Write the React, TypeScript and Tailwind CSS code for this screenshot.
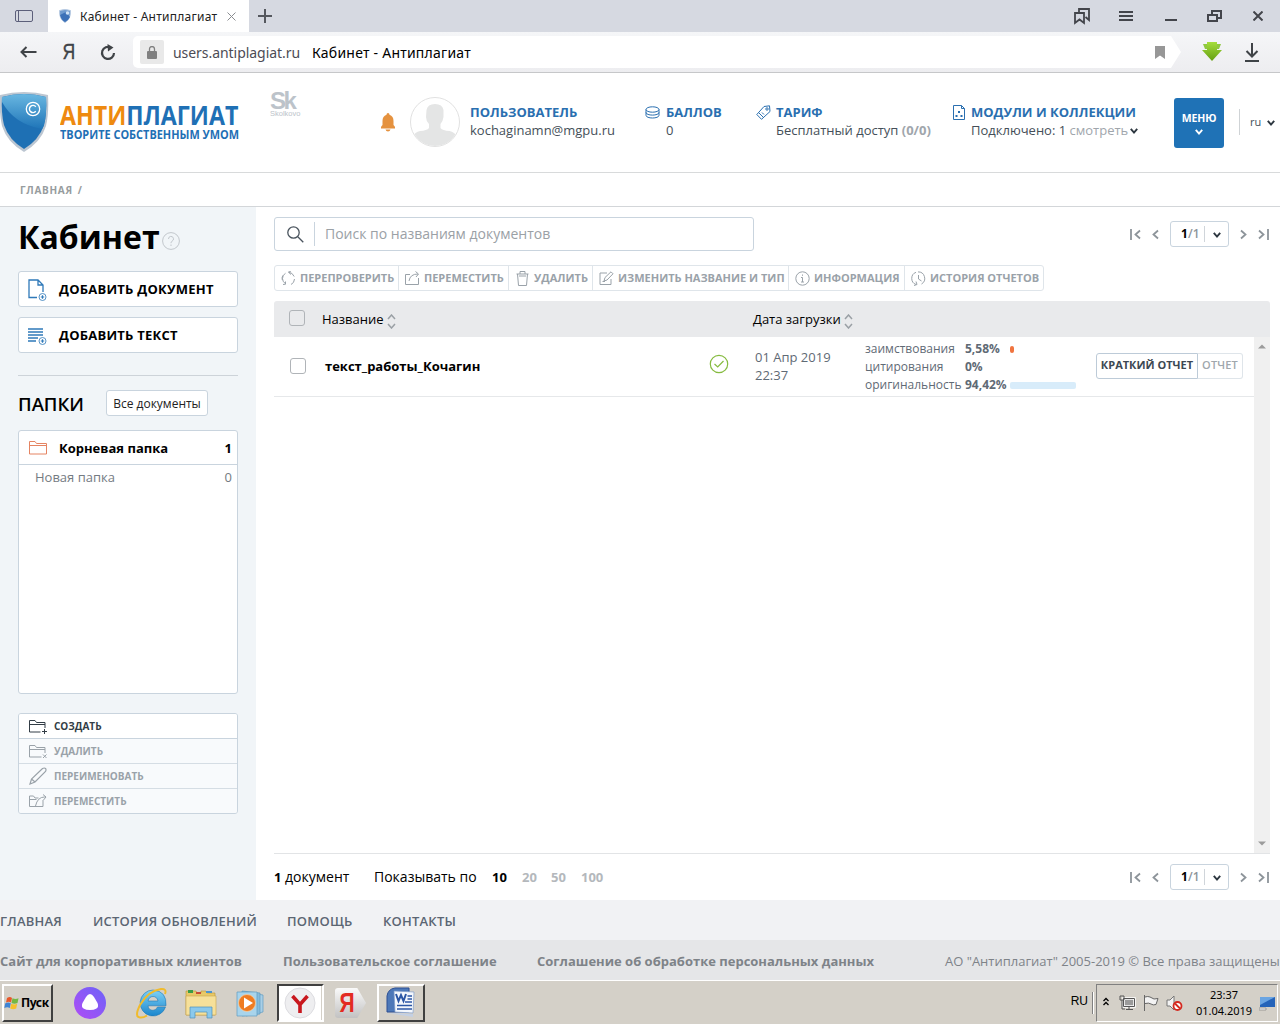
import React from "react";

type IconProps = { className?: string };
type Kids = { children: React.ReactNode; className?: string };

const Line = ({ w = 16, h = 16, sw = 1, className = "", children }: { w?: number; h?: number; sw?: number; className?: string; children: React.ReactNode }) => (
  <svg width={w} height={h} viewBox={`0 0 ${w} ${h}`} fill="none" stroke="currentColor" strokeWidth={sw} className={`shrink-0 ${className}`}>
    {children}
  </svg>
);

const Chevron = ({ className = "" }: IconProps) => (
  <Line w={8} h={6} sw={1.9} className={className}><path d="M.8 .8L4 4.500 7.200 .8" /></Line>
);

/* ---------- Browser ---------- */

function TabStrip() {
  return (
    <div className="flex h-8 items-center bg-[#d6d9e1] text-[#43454b]">
      <div className="flex w-12 justify-center">
        <Line w={18} h={12} className="text-[#5c5f7a]"><rect x="0.5" y="0.5" width="17" height="11" rx="1.5" /><path d="M3.500 1v10" /></Line>
      </div>
      <div className="flex h-8 w-[201px] items-center bg-white">
        <svg width="12" height="14" viewBox="0 0 12 14" className="ml-[11px] shrink-0">
          <path d="M0.5 1.5Q6 -.5 11.5 1.5Q12 10 6 13.5Q0 10 .5 1.5Z" fill="#6f9bcf" stroke="#b9cbe2" />
          <path d="M1 6L7 3L11 8Q9 12 6 13Q2 11 1 6Z" fill="#3d72b8" />
          <circle cx="8.5" cy="4" r="1.8" fill="#cfe2f5" />
        </svg>
        <span className="ml-[9px] w-[139px] pt-px font-['Noto_Sans'] text-[12px] tracking-[0.250px] text-[#222]">Кабинет - Антиплагиат</span>
        <Line w={9} h={9} className="ml-[8px] text-[#8a8c90]"><path d="M.5 .5l8 8M8.500 .5l-8 8" /></Line>
      </div>
      <Line w={14} h={14} sw={2} className="ml-[9px] text-[#55585e]"><path d="M7 0v14M0 7h14" /></Line>
      <div className="ml-auto flex items-center">
        <Line w={16} h={17} sw={1.800} className="mr-[29px]"><path d="M1 5h9v10l-4.500-3.500L1 15zM5 5V1h10v11l-3.500-3" /></Line>
        <Line w={14} h={10} sw={2} className="mr-[32px]"><path d="M0 1h14M0 5h14M0 9h14" /></Line>
        <Line w={12} h={10} sw={2} className="mr-[30px]"><path d="M0 9h12" /></Line>
        <Line w={15} h={12} sw={2} className="mr-[31px]"><path d="M1 5h9v6H1zM5 5V1h9v7h-4" /></Line>
        <Line w={10} h={10} sw={2} className="mr-[17px]"><path d="M.5 .5l9 9M9.500 .5l-9 9" /></Line>
      </div>
    </div>
  );
}

function AddressBar() {
  return (
    <div className="flex h-[41px] items-center border-b border-[#c6c7c9] bg-gradient-to-b from-[#f5f6f8] to-[#ededf0] text-[#3f4347]">
      <Line w={17} h={12} sw={2} className="ml-[20px]"><path d="M16.500 6H1.500M6.500 1L1.500 6l5 5" /></Line>
      <span className="ml-[24px] w-[14px] scale-x-[0.800] text-center font-['Liberation_Sans'] text-[22px] leading-none [-webkit-text-stroke:0.4px]">Я</span>
      <Line w={16} h={17} sw={2.2} className="ml-[25px]"><path d="M10.800 3.600A6 6 0 1 0 14 9" /><path d="M7.500 0l6 3.500-5.500 4z" fill="currentColor" stroke="none" /></Line>
      <div className="ml-[17px] flex h-8 w-[1048px] items-center rounded-l-[5px] bg-white [clip-path:polygon(0_0,1038px_0,100%_50%,1038px_100%,0_100%)]">
        <div className="ml-[7px] flex h-6 w-6 items-center justify-center rounded-[2px] bg-[#e9e9e9] text-[#808080]">
          <Line w={10} h={13}><rect x="0" y="5" width="10" height="8" rx="1" fill="currentColor" stroke="none" /><path d="M2.500 5.500V3a2.500 2.500 0 0 1 5 0v2.500" strokeWidth="1.300" /></Line>
        </div>
        <span className="ml-[9px] w-[139px] font-['Noto_Sans'] text-[14px] tracking-[-0.050px] text-[#4c4c55]">users.antiplagiat.ru</span>
        <span className="font-['Noto_Sans'] text-[14px] tracking-[0.230px] text-black">Кабинет - Антиплагиат</span>
        <svg width="10" height="13" viewBox="0 0 10 13" className="ml-auto mr-[16px]"><path d="M0 0h10v13L5 9.500 0 13z" fill="#979797" /></svg>
      </div>
      <svg width="20" height="20" viewBox="0 0 20 20" className="ml-[21px] shrink-0">
        <defs><linearGradient id="dl" x1="0" y1="0" x2="0" y2="1"><stop offset="0" stopColor="#a4dd3c" /><stop offset="1" stopColor="#659f12" /></linearGradient></defs>
        <path d="M1 2h4v5H3zM19 2h-4v5h2z" fill="#8fc840" />
        <path d="M5 0h10v8h5L10 19 0 8h5z" fill="url(#dl)" />
      </svg>
      <Line w={14} h={19} sw={2} className="ml-[23px]"><path d="M7 0v13M1.500 8L7 13.500 12.500 8M0 18h14" /></Line>
    </div>
  );
}

/* ---------- Site header ---------- */

function Shield() {
  return (
    <svg width="49" height="62" viewBox="0 0 49 62" className="shrink-0">
      <defs>
        <linearGradient id="sh" x1="0" y1="0" x2="0" y2="1"><stop offset="0" stopColor="#69b7e1" /><stop offset="1" stopColor="#1f75b8" /></linearGradient>
      </defs>
      <path d="M0 4Q24-2 48 4Q49 22 46 35Q41 51 24 61Q7 51 2 35Q-1 22 0 4Z" fill="#bcc6d1" />
      <path d="M2 6Q24 0 46 6Q47 22 44 34Q39 49 24 58Q9 49 4 34Q1 22 2 6Z" fill="#1e70b4" />
      <path d="M2 6Q24 0 46 6Q47 22 44 34Q43 37 42 38Q14 33 2 11Z" fill="url(#sh)" />
      <circle cx="33" cy="18" r="6.700" fill="none" stroke="#fff" strokeWidth="1.300" />
      <path d="M35.800 15.700a3.600 3.600 0 1 0 0 4.600" fill="none" stroke="#fff" strokeWidth="1.400" />
    </svg>
  );
}

const HeadTitle = ({ children, className = "" }: Kids) => (
  <div className={`h-[18px] text-[13px] font-bold leading-[18px] text-[#2a6fb0] ${className}`}>{children}</div>
);
const HeadText = ({ children, className = "" }: Kids) => (
  <div className={`flex h-[18px] items-center text-[13px] leading-[18px] text-[#454f59] ${className}`}>{children}</div>
);

function SiteHeader() {
  return (
    <header className="flex h-[100px] items-start border-b border-[#d8dadb] bg-white">
      <div className="flex w-[270px] pt-[18px]">
        <Shield />
        <div className="ml-[11px] flex w-[180px] flex-col pt-[10px] font-bold">
          <span className="h-[27px] origin-left scale-x-[0.859] text-[27px] leading-[27px] text-[#1f70b5]"><span className="text-[#ee8a10]">АНТИ</span>ПЛАГИАТ</span>
          <span className="h-[14px] origin-left scale-x-[0.910] text-[12px] leading-[14px] text-[#1f70b5]">ТВОРИТЕ СОБСТВЕННЫМ УМОМ</span>
        </div>
      </div>
      <div className="flex w-[110px] flex-col pt-[18px] font-['Liberation_Sans'] text-[#bcc3ca]">
        <span className="h-[19px] text-[24px] font-bold leading-[19px] tracking-[-2.500px]">Sk</span>
        <span className="text-[7.500px] leading-[8px]">Skolkovo</span>
      </div>
      <svg width="16" height="20" viewBox="0 0 16 20" className="mt-[40px] shrink-0"><path d="M8 0q1.500 0 1.500 1.700Q13.500 3 13.500 8v4q1 1 1.500 2v1.500H1V14q.5-1 1.500-2V8Q2.500 3 6.500 1.700 6.500 0 8 0ZM5.500 16.500h5q-.5 2-2.500 2t-2.500-2Z" fill="#e5923f" /></svg>
      <svg width="50" height="50" viewBox="0 0 50 50" className="ml-[14px] mt-[24px] shrink-0">
        <defs><clipPath id="av"><circle cx="25" cy="25" r="24" /></clipPath></defs>
        <circle cx="25" cy="25" r="24.500" fill="#fff" stroke="#e1e1e1" />
        <path clipPath="url(#av)" d="M16.500 13q1-6 8.500-6t8.500 6v7q-.5 4-3 7v4q2 2.500 9 3 5 1 8 6V50H2V40q3-5 8-6 7-.5 9-3v-4q-3-3-3-7Z" fill="#e4e5e5" />
      </svg>
      <div className="ml-[10px] mt-[30px] w-[175px]">
        <HeadTitle>ПОЛЬЗОВАТЕЛЬ</HeadTitle>
        <HeadText>kochaginamn@mgpu.ru</HeadText>
      </div>
      <div className="mt-[30px] flex w-[111px]">
        <Line w={15} h={13} className="mr-[6px] mt-[3px] text-[#2a6fb0]"><ellipse cx="7.500" cy="3.500" rx="6.500" ry="2.700" /><path d="M1 3.500v5.800c0 3.600 13 3.600 13 0V3.500M1 6.400c0 3.600 13 3.600 13 0" /></Line>
        <div><HeadTitle>БАЛЛОВ</HeadTitle><HeadText>0</HeadText></div>
      </div>
      <div className="mt-[30px] flex w-[197px]">
        <Line w={15} h={15} className="mr-[5px] mt-[2px] text-[#2a6fb0]"><path d="M8 1.500L13.500 .8 14 6.500 5.500 14.300.8 9.500zM3 8l5 5" /><circle cx="11" cy="4" r="1.200" /><path d="M6 7.500l2 2" /></Line>
        <div><HeadTitle>ТАРИФ</HeadTitle><HeadText>Бесплатный доступ&nbsp;<b className="text-[#a0a6ac]">(0/0)</b></HeadText></div>
      </div>
      <div className="mt-[30px] flex w-[221px]">
        <Line w={12} h={15} className="mr-[6px] mt-[2px] text-[#2a6fb0]"><path d="M.5 .5h8l3 3v11H.5zM8.500 .5v3h3" /><path d="M5 6h2v2H5zM2.500 10h2v2h-2zM7.500 10h2v2h-2z" fill="currentColor" stroke="none" /></Line>
        <div><HeadTitle>МОДУЛИ И КОЛЛЕКЦИИ</HeadTitle><HeadText>Подключено: 1&nbsp;<span className="text-[#a0a6ac]">смотреть</span><Chevron className="ml-[2px] mt-[2px] text-[#2d3740]" /></HeadText></div>
      </div>
      <div className="mt-[25px] flex h-[50px] w-[50px] shrink-0 flex-col items-center rounded-[3px] bg-[#1f72b6] text-white">
        <span className="mt-[12px] text-[10.500px] font-bold leading-[16px] tracking-[-0.150px]">МЕНЮ</span>
        <Chevron className="mt-[3px]" />
      </div>
      <div className="ml-[15px] mt-[36px] flex h-[26px] items-center border-l border-[#cfd3d6] pl-[10px] text-[11px] text-[#454f59]">ru<Chevron className="ml-[6px] mt-[2px] text-[#2d3740]" /></div>
    </header>
  );
}

/* ---------- Sidebar ---------- */

const PlusBadge = ({ x, y }: { x: number; y: number }) => (
  <g><circle cx={x} cy={y} r="3.500" strokeWidth="0.800" fill="#fff" /><path d={`M${x - 1.700} ${y}h3.400M${x} ${y - 1.700}v3.400`} strokeWidth="1.200" /></g>
);
const folder = "M.5 13V1.500h5.500l1.500 2h8.500V9M.5 5.500h15.500";

function BigButton({ icon, children }: { icon: React.ReactNode; children: React.ReactNode }) {
  return (
    <button className="flex h-9 w-[220px] items-center rounded-[3px] border border-[#c9d4de] bg-white pl-[9px] text-[13px] font-bold tracking-[0.230px] text-black">
      <span className="flex w-[31px] pt-[2px]">{icon}</span><span className="pt-[2px]">{children}</span>
    </button>
  );
}

function FolderAction({ icon, label, on = false }: { icon: React.ReactNode; label: string; on?: boolean }) {
  return (
    <div className={`flex h-[25px] items-center border-b pl-[10px] text-[10px] font-bold last:h-[24px] last:border-b-0 ${on ? "border-[#c9d4de] bg-white text-[#333d46]" : "border-[#d5dde4] bg-[#f8fafc] text-[#9aa2a9]"}`}>
      <span className="flex w-[25px]">{icon}</span>{label}
    </div>
  );
}

function Sidebar() {
  return (
    <aside className="w-[256px] shrink-0 bg-[#f1f5f8] px-[18px]">
      <div className="flex h-[64px] items-start">
        <h1 className="text-[32px] font-bold leading-[60px] text-black">Кабинет</h1>
        <Line w={18} h={18} className="ml-[2px] mt-[25px] text-[#c2c7cc]"><circle cx="9" cy="9" r="8.400" /><path d="M6.500 7a2.500 2.500 0 1 1 3.500 2.200q-1 .5-1 2M9 12.500v1.500" /></Line>
      </div>
      <div className="flex flex-col gap-[10px]">
        <BigButton icon={<Line w={19} h={22} sw={1.300} className="text-[#2f79b9]"><path d="M9 18.500H1V1h9l5 5v7M10 1v5h5" /><PlusBadge x={14.500} y={18} /></Line>}>ДОБАВИТЬ ДОКУМЕНТ</BigButton>
        <BigButton icon={<Line w={19} h={18} sw={1.600} className="text-[#2f79b9]"><path d="M0 2h15M0 5h15M0 8h15M0 11h10M0 14h8" /><PlusBadge x={14.500} y={14} /></Line>}>ДОБАВИТЬ ТЕКСТ</BigButton>
      </div>
      <div className="mt-[22px] flex h-[55px] items-center border-t border-[#cdd3d9]">
        <span className="w-[88px] pt-px text-[18.500px] font-semibold text-black">ПАПКИ</span>
        <button className="h-[26px] w-[102px] rounded-[3px] border border-[#c9d4de] bg-white pt-px text-[12px] text-[#222]">Все документы</button>
      </div>
      <div className="h-[264px] rounded-[3px] border border-[#c9d4de] bg-white">
        <div className="flex h-[34px] items-center border-b border-[#c9d4de] pl-[10px] pr-[5px] pt-[2px] text-[13px] font-bold text-black">
          <Line w={18} h={15} className="mb-[2px] mr-[12px] text-[#e58462]"><path d="M.5 14V1.500h5.500l1.500 2h10V14zM.5 5.500h17" /></Line>Корневая папка<span className="ml-auto">1</span>
        </div>
        <div className="flex h-[26px] items-center pl-[16px] pr-[5px] text-[13px] text-[#747b82]">Новая папка<span className="ml-auto">0</span></div>
      </div>
      <div className="mt-[19px] overflow-hidden rounded-[3px] border border-[#c9d4de]">
        <FolderAction on label="СОЗДАТЬ" icon={<Line w={19} h={15}><path d={folder} /><path d="M.5 13h11M15.500 10v5M13 12.500h5" /></Line>} />
        <FolderAction label="УДАЛИТЬ" icon={<Line w={19} h={15}><path d={folder} /><path d="M.5 13h12M14 10.500l3.500 3.500M17.500 10.500L14 14" /></Line>} />
        <FolderAction label="ПЕРЕИМЕНОВАТЬ" icon={<Line w={19} h={18} sw={1.200}><path d="M1 17l1.500-5L13.500 1.500q2-1 3 0t0 3L6 15zM2.500 12L6 15" /></Line>} />
        <FolderAction label="ПЕРЕМЕСТИТЬ" icon={<Line w={19} h={14}><path d="M14 6v6.500H.5V2h4l1.500 2h3.500M.5 5.500h7M6.500 12q2-9 9-9h1.500M14 .5L17 3l-2.500 3" /></Line>} />
      </div>
    </aside>
  );
}

/* ---------- Documents ---------- */

function Pager() {
  return (
    <div className="mr-px flex items-center text-[#8d949a]">
      <Line w={11} h={11} sw={1.800}><path d="M1 0v11M10 1.500L5.500 5.500 10 9.500" /></Line>
      <Line w={7} h={11} sw={1.800} className="ml-[11px]"><path d="M6 1.500L1.500 5.500 6 9.500" /></Line>
      <div className="ml-[11px] flex h-[26px] w-[59px] items-center rounded-[3px] border border-[#c9d4de] bg-white pl-[10px] text-[12px]">
        <b className="text-black">1</b><span className="font-semibold tracking-[0.300px]">/1</span>
        <span className="ml-[4px] h-4 w-px bg-[#d0d5da]" />
        <Chevron className="ml-[8px] mt-[1px] text-[#2d3740]" />
      </div>
      <Line w={7} h={11} sw={1.800} className="ml-[11px]"><path d="M1 1.500L5.500 5.500 1 9.500" /></Line>
      <Line w={11} h={11} sw={1.800} className="ml-[11px]"><path d="M10 0v11M1 1.500L5.500 5.500 1 9.500" /></Line>
    </div>
  );
}

const tools: { label: string; w: string; icon: React.ReactNode }[] = [
  { label: "ПЕРЕПРОВЕРИТЬ", w: "w-[124px]", icon: <path d="M4.500 12.700A6 6 0 0 1 4.500 2.300M7.500 1.200Q11.500 1.500 13.200 5.500M13.500 8Q13.300 12 10 13.500M1.800 4.500A6 6 0 0 0 1.300 9M10 3.500L7.500 1.200 10 0M4.500 10.500v2.700L2 13.500" /> },
  { label: "ПЕРЕМЕСТИТЬ", w: "w-[110px]", icon: <path d="M5 3.500H.5v10h13V7M4 10q1-7 9-7M10.500 .5L13.500 3 11 6" /> },
  { label: "УДАЛИТЬ", w: "w-[84px]", icon: <path d="M1.500 3h12M5 3V.5h5V3M2.500 3l1 11.500h8L12.500 3M4 5h7" /> },
  { label: "ИЗМЕНИТЬ НАЗВАНИЕ И ТИП", w: "w-[196px]", icon: <path d="M8 2H1v11.500h11V8M5 10l1-3.500L12 .8l2 2L8 9zM3.500 10.500H6" /> },
  { label: "ИНФОРМАЦИЯ", w: "w-[116px]", icon: <><circle cx="7.500" cy="7.500" r="6.700" /><path d="M6 6.500h1.500V11M6 11h3M7.500 3.500v1.300" /></> },
  { label: "ИСТОРИЯ ОТЧЕТОВ", w: "w-[138px]", icon: <path d="M5 13.500A6.500 6.500 0 0 1 5 1.300M7 .9A6.500 6.500 0 0 1 10.500 13M7.500 4v4l3 2M5 10.500l1 3-3 1" /> },
];

const Sort = () => <Line w={9} h={15} sw={1.500} className="ml-[3px] mt-[2px] text-[#9aa0a5]"><path d="M1 5l3.500-4L8 5M1 10l3.500 4L8 10" /></Line>;
const Check = ({ className = "" }: IconProps) => <span className={`h-4 w-4 shrink-0 rounded-[3px] border border-[#b0b4b8] ${className}`} />;

function Stat({ name, value, bar }: { name: string; value: string; bar?: string }) {
  return (
    <div className="flex h-[18px] items-center">
      <span className="w-[100px] text-[12px]">{name}</span>
      <b className="w-[45px] text-[12px]">{value}</b>
      {bar && <span className={bar} />}
    </div>
  );
}

function Documents() {
  return (
    <main className="flex flex-1 flex-col bg-white pl-[18px] pr-[10px] pt-[10px]">
      <div className="flex h-[34px] items-center justify-between">
        <div className="flex h-[34px] w-[480px] items-center rounded-[3px] border border-[#c9d4de] text-[14px] text-[#9ba1a6]">
          <Line w={17} h={17} sw={1.300} className="ml-[12px] mt-px text-[#4a545e]"><circle cx="6.500" cy="6.500" r="5.700" /><path d="M10.800 10.800l5.500 5.500" /></Line>
          <span className="ml-[10px] h-6 w-px bg-[#c9d4de]" />
          <span className="ml-[10px] pb-[2px]">Поиск по названиям документов</span>
        </div>
        <Pager />
      </div>
      <div className="mt-[14px] flex h-[26px] w-[770px] rounded-[3px] border border-[#dfe5ea]">
        {tools.map((t) => (
          <div key={t.label} className={`flex shrink-0 items-center border-r border-[#dfe5ea] pl-[6px] text-[11px] font-bold text-[#9aa2a9] last:border-r-0 ${t.w}`}>
            <Line w={15} h={15} className="mr-[4px]">{t.icon}</Line>{t.label}
          </div>
        ))}
      </div>
      <div className="mt-[10px] flex h-[36px] items-center rounded-t-[3px] bg-[#e9eaec] text-[13px] text-black">
        <Check className="mb-[2px] ml-[15px]" />
        <div className="ml-[17px] flex w-[431px] items-center pt-[2px]">Название<Sort /></div>
        <div className="flex items-center pt-[2px]">Дата загрузки<Sort /></div>
      </div>
      <div className="flex h-[517px] border-b border-[#e2e4e6]">
        <div className="flex-1">
          <div className="flex h-[60px] items-center border-b border-[#e6e8ea] pb-[2px] text-[#5f6a75]">
            <Check className="ml-[16px]" />
            <span className="ml-[19px] w-[384px] pt-[2px] text-[13px] font-bold text-black">текст_работы_Кочагин</span>
            <Line w={20} h={20} className="mb-[3px] text-[#86bb40]" sw={1.200}><circle cx="10" cy="10" r="8.700" /><path d="M5.500 10l3.200 3L14.500 7" /></Line>
            <div className="ml-[26px] w-[110px] text-[13px] leading-[18px]">01 Апр 2019<br />22:37</div>
            <div className="w-[231px] self-start pt-[3px]">
              <Stat name="заимствования" value="5,58%" bar="h-[7px] w-1 rounded-[2px] bg-[#f0743f]" />
              <Stat name="цитирования" value="0%" />
              <Stat name="оригинальность" value="94,42%" bar="h-[7px] w-[66px] rounded-[2px] bg-[#d8ecfa]" />
            </div>
            <button className="h-[26px] w-[102px] rounded-l-[3px] border border-[#bdcbd8] text-[11px] font-bold text-[#3c4853]">КРАТКИЙ ОТЧЕТ</button>
            <button className="h-[26px] w-[45px] rounded-r-[3px] border border-l-0 border-[#dfe5ea] text-[11px] font-semibold tracking-[0.150px] text-[#a0a7ad]">ОТЧЕТ</button>
          </div>
        </div>
        <div className="flex w-4 flex-col items-center justify-between bg-[#f0f0f0] py-[7px]">
          <svg width="10" height="5" viewBox="0 0 10 5"><path d="M1 4.500L5 .5l4 4z" fill="#9b9b9b" /></svg>
          <svg width="10" height="5" viewBox="0 0 10 5"><path d="M1 .5l4 4 4-4z" fill="#9b9b9b" /></svg>
        </div>
      </div>
      <div className="flex h-[46px] items-center text-[14px] text-black">
        <div className="w-[100px]"><b className="text-[13px]">1</b> документ</div>
        <span className="w-[118px] pb-[2px]">Показывать по</span>
        <div className="flex pt-px text-[13px] font-bold text-[#b4b8bc]">
          <span className="w-[30px] text-black">10</span><span className="w-[29px]">20</span><span className="w-[30px]">50</span><span>100</span>
        </div>
        <div className="ml-auto"><Pager /></div>
      </div>
    </main>
  );
}

function Footer() {
  return (
    <footer>
      <nav className="flex h-10 items-center bg-[#f1f2f4] pt-[3px] text-[13px] font-semibold tracking-[0.220px] text-[#5b6673]">
        <span className="w-[93px]">ГЛАВНАЯ</span><span className="w-[194px]">ИСТОРИЯ ОБНОВЛЕНИЙ</span><span className="w-[96px]">ПОМОЩЬ</span><span>КОНТАКТЫ</span>
      </nav>
      <div className="flex h-10 items-center bg-[#e5e6e8] pt-[3px] text-[13px] font-bold text-[#7e8388]">
        <span className="w-[283px]">Сайт для корпоративных клиентов</span><span className="w-[254px]">Пользовательское соглашение</span><span className="w-[408px]">Соглашение об обработке персональных данных</span>
        <span className="font-normal">АО "Антиплагиат" 2005-2019 © Все права защищены</span>
      </div>
    </footer>
  );
}

/* ---------- Taskbar ---------- */

const raised = "border-2 border-t-white border-l-white border-b-[#404040] border-r-[#404040]";

function Taskbar() {
  return (
    <div className="flex h-11 items-start border-t border-white bg-[#d4d0c8] pt-[3px] font-['Noto_Sans'] text-black">
      <div className={`ml-[2px] flex h-[38px] w-[51px] items-center ${raised}`}>
        <svg width="15" height="14" viewBox="0 0 15 14" className="shrink-0">
          <path d="M3 2q3-2 5 0L7 6.500q-2-1.500-5 0z" fill="#e8582a" /><path d="M8.500 2.300q3 1.500 6 0L13.500 7q-3 1.500-6 0z" fill="#74b843" />
          <path d="M1.300 7.200q3-1.500 5.500 0l-1 4.800q-2.500-1.500-5.500 0z" fill="#3f84d4" /><path d="M7.200 7.700q3 1.500 6 0l-1 4.800q-3 1.500-6 0z" fill="#f6c02c" />
        </svg>
        <span className="ml-[2px] text-[12px] font-bold tracking-[-0.400px]">Пуск</span>
      </div>
      <svg width="32" height="32" viewBox="0 0 32 32" className="ml-[21px] mt-[3px]">
        <defs><linearGradient id="al" x1="0" y1="1" x2="1" y2="0"><stop offset="0" stopColor="#b04cf5" /><stop offset="1" stopColor="#6c63f8" /></linearGradient></defs>
        <circle cx="16" cy="16" r="16" fill="url(#al)" /><path d="M16 7q2 0 4 3l3.500 6q1.500 4-1 5.500Q20 23 16 23t-6.500-1.500Q7 20 8.500 16L12 10q2-3 4-3Z" fill="#fff" />
      </svg>
      <svg width="32" height="32" viewBox="0 0 32 32" className="ml-[30px] mt-[3px]">
        <defs><linearGradient id="ie" x1="0" y1="0" x2="0" y2="1"><stop offset="0" stopColor="#7fd2f6" /><stop offset="1" stopColor="#1a86cd" /></linearGradient></defs>
        <path d="M17 3a13 13 0 1 0 12.500 17h-8q-1.500 3.300-4.500 3.300-4.500 0-5-4.500H30Q31 4 17 3Zm-5 11q1-4.500 5-4.500t5 4.500Z" fill="url(#ie)" stroke="#2279b4" strokeWidth="0.600" />
        <path d="M29 7Q31 1.500 25 2 12 4 4 18-2 30 4 30.500q3 .5 7-2" fill="none" stroke="#f0bb2d" strokeWidth="2" />
      </svg>
      <svg width="34" height="32" viewBox="0 0 34 32" className="ml-[16px] mt-[4px]">
        <path d="M2 6V3h10l1 2h4V3h5l1 2h8v22H2z" fill="#e8c968" stroke="#b99638" strokeWidth="0.600" /><path d="M4 2h5v3H4z" fill="#3a9c46" /><path d="M12 4h5v2h-5z" fill="#c94b35" /><path d="M22 3h6v2h-6z" fill="#4b95d0" />
        <path d="M2 8h30v19H2z" fill="#f6e09a" stroke="#c9a54a" strokeWidth="0.600" /><path d="M6 30V19h22v11h-5v-6H11v6z" fill="#8bc9ec" stroke="#4e91bc" strokeWidth="0.700" />
      </svg>
      <svg width="30" height="30" viewBox="0 0 30 30" className="ml-[18px] mt-[5px]">
        <path d="M9 3l18 3v17l-17 4z" fill="#a9cfe6" stroke="#5e9cc2" strokeWidth="0.700" /><path d="M6 2l18 2v21L6 27z" fill="#86bcdc" stroke="#5e9cc2" strokeWidth="0.700" /><path d="M1 3h20v24H1z" fill="#a8d4ec" stroke="#5e9cc2" strokeWidth="0.700" />
        <circle cx="11" cy="14" r="8.500" fill="#ef7c22" stroke="#fbd1a3" strokeWidth="0.700" /><path d="M8 8.500v11l9-5.500z" fill="#fff" />
      </svg>
      <div className="ml-[11px] flex h-[38px] w-[47px] border-2 border-b-white border-l-[#404040] border-r-white border-t-[#404040] bg-[#d4d0c8]">
        <div className="flex w-[42px] justify-center border-r border-white bg-white">
          <svg width="32" height="34" viewBox="0 0 32 34"><circle cx="16" cy="17" r="15" fill="#eeeef0" stroke="#dcdce0" /><path d="M8.500 10l7.500 8.500 7.500-8.500M16 18v9" stroke="#c8171e" strokeWidth="3.600" fill="none" /></svg>
        </div>
      </div>
      <div className="ml-[11px] mt-[4px] flex h-[30px] w-[31px] items-center rounded-l-[3px] bg-gradient-to-b from-[#fafafa] to-[#c2c2c2] pl-[3px] font-['Liberation_Sans'] text-[28px] font-bold leading-none text-[#e32b22] [clip-path:polygon(0_0,72%_0,100%_50%,72%_100%,0_100%)]"><span className="-ml-px scale-x-[0.750]">Я</span></div>
      <div className={`ml-[11px] flex h-[38px] w-[48px] items-center justify-center ${raised}`}>
        <svg width="32" height="32" viewBox="0 0 32 32">
          <path d="M2 9Q3 2 10 1h14v24H2z" fill="#4d78b8" stroke="#2d4f93" /><path d="M9 4l20 1-1 21-18-1z" fill="#f4f8fd" stroke="#7f9cc9" strokeWidth="0.700" />
          <path d="M11 7l2.500 7L16 8l2.500 6L21 7" fill="none" stroke="#2c57a5" strokeWidth="2" /><path d="M22.500 9H27M22.500 12H27M20 15h7M12 18.500h15M12 22h15" stroke="#2c57a5" strokeWidth="1.600" /><path d="M3 26l25 1v3z" fill="#c3d0e4" />
        </svg>
      </div>
      <div className="ml-auto mr-[2px] flex items-start">
        <span className="mt-[8px] font-['Liberation_Sans'] text-[12px] leading-[18px]">RU</span>
        <span className="ml-[4px] h-[22px] w-[2px] self-center border-l border-[#808080] bg-white" />
        <div className="ml-[2px] flex h-[38px] w-[182px] items-center border border-b-white border-l-[#808080] border-r-white border-t-[#808080]">
          <Line w={6} h={9} sw={1.300} className="ml-[6px] mb-[3px]"><path d="M.5 4L3 1.500 5.500 4M.5 8L3 5.500 5.500 8" /></Line>
          <Line w={17} h={16} className="ml-[10px] text-[#555]"><path d="M4.500 3.500h11v8h-11z" fill="#9a9a9a" stroke="#fff" strokeWidth="2.500" /><path d="M4.500 3.500h11v8h-11zM7 14.500h7M10 12v2M1 1h4v4H1zM3 5v9h3" /></Line>
          <Line w={16} h={16} className="ml-[7px] text-[#666]"><path d="M1.500 0v16M2 2q3-1 5 0t4 2l4-.5-2 6q-3 1-5-.5T2 8.500" fill="#f3f3f3" /></Line>
          <Line w={17} h={16} className="ml-[7px] text-[#777]"><path d="M1 5h3l4-4v14l-4-4H1z" fill="#f3f3f3" /><circle cx="11.500" cy="11" r="4" fill="#fff" stroke="#d42a20" strokeWidth="1.800" /><path d="M9 8.500l5 5" stroke="#d42a20" strokeWidth="1.800" /></Line>
          <div className="ml-[12px] w-[58px] text-center font-['Noto_Sans'] text-[11px] leading-[16px]">23:37<br />01.04.2019</div>
          <svg width="16" height="14" viewBox="0 0 16 14" className="ml-[6px] mt-[2px] shrink-0"><path d="M1 0h15v10H1z" fill="#2463b9" /><path d="M1 0h15L1 8z" fill="#6ba5e2" /><path d="M0 11h7v2H0z" fill="#eee" stroke="#777" strokeWidth="0.600" /></svg>
        </div>
      </div>
    </div>
  );
}

export default function App() {
  return (
    <div className="flex h-[1024px] w-[1280px] flex-col overflow-hidden whitespace-nowrap bg-white font-['Open_Sans','Noto_Sans',sans-serif]">
      <TabStrip />
      <AddressBar />
      <SiteHeader />
      <div className="flex h-[34px] items-center border-b border-[#d3d6d9] pl-[20px] pt-[2px] text-[10px] font-bold tracking-[0.700px] text-[#979c9e]">ГЛАВНАЯ<span className="ml-[5px]">/</span></div>
      <div className="flex h-[693px]">
        <Sidebar />
        <Documents />
      </div>
      <Footer />
      <Taskbar />
    </div>
  );
}
